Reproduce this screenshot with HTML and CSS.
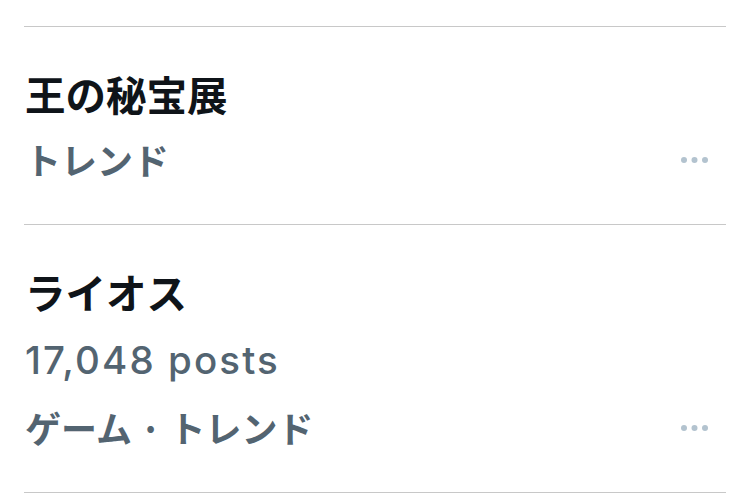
FILE: index.html
```html
<!DOCTYPE html>
<html lang="ja">
<head>
<meta charset="utf-8">
<link rel="stylesheet" href="styles.css">
</head>
<body>
<div class="list">
  <div class="trend">
    <div class="title">王の秘宝展</div>
    <div class="meta meta-last">
      <span class="jp">トレンド</span>
      <svg class="more" width="30" height="8" viewBox="0 0 30 8"><circle cx="4" cy="4" r="3"/><circle cx="14.5" cy="4" r="3"/><circle cx="25" cy="4" r="3"/></svg>
    </div>
  </div>
  <div class="trend">
    <div class="title">ライオス</div>
    <div class="meta count">17,048 posts</div>
    <div class="meta meta-last">
      <span class="jp">ゲーム · トレンド</span>
      <svg class="more" width="30" height="8" viewBox="0 0 30 8"><circle cx="4" cy="4" r="3"/><circle cx="14.5" cy="4" r="3"/><circle cx="25" cy="4" r="3"/></svg>
    </div>
  </div>
</div>
</body>
</html>
```
FILE: styles.css
```css
html, body {
  margin: 0;
  padding: 0;
  background: #ffffff;
}
body {
  font-family: "Inter", "Noto Sans CJK JP", sans-serif;
}
.list {
  padding: 26px 24px 0 24px;
}
.trend {
  border-top: 1px solid #c8c8c8;
  padding: 33px 0 32px 1px;
}
.trend:last-child {
  border-bottom: 1px solid #c8c8c8;
}
.title {
  font-family: "Noto Sans CJK JP", sans-serif;
  font-weight: 700;
  font-size: 40.5px;
  line-height: 67px;
  color: #0f1419;
}
.meta {
  color: #536471;
  line-height: 65px;
  height: 65px;
}
.jp {
  font-family: "Noto Sans CJK JP", sans-serif;
  font-weight: 700;
  font-size: 36px;
}
.count {
  font-family: "Inter", sans-serif;
  font-weight: 500;
  font-size: 38.5px;
  letter-spacing: 2.1px;
  line-height: 70px;
  height: 70px;
}
.meta-last {
  display: flex;
  align-items: center;
  justify-content: space-between;
  padding-right: 16px;
}
.more {
  display: block;
  fill: #b3c3cf;
}
```
